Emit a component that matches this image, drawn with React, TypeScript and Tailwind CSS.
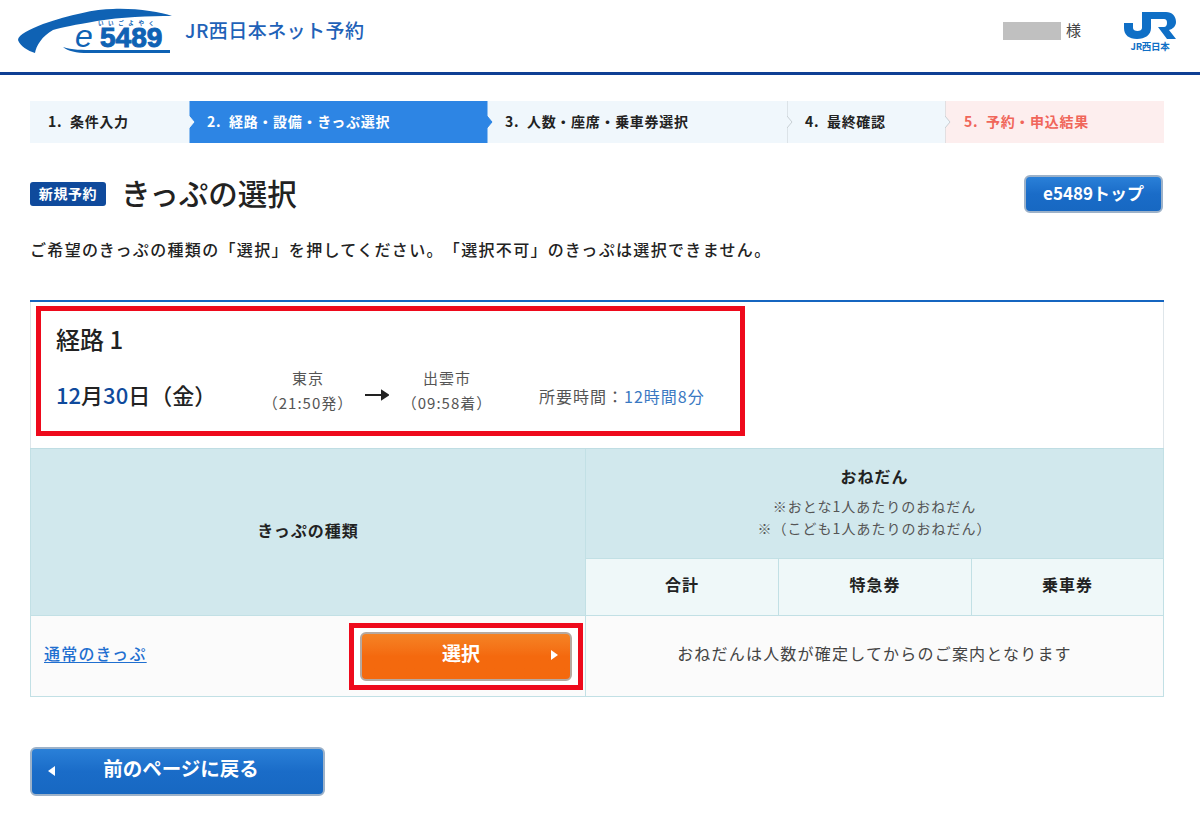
import React from "react";

const font = { fontFamily: '"Noto Sans CJK JP", "Noto Sans", sans-serif' };

function Logo() {
  return (
    <svg width="160" height="50" viewBox="17 8 160 50" className="block overflow-visible">
      <path d="M172 16 C160 12 135 8 113 9 C95 9 70 15 43 24 C30 29 18 35 18 40 C20 46 28 51 35 53 C36 46 42 36 53 30 C62 27 75 25 97 21 C120 17 150 16 172 16Z" fill="#0f62b4" />
      <path d="M63 47 C72 50 82 50 95 50 L170 50 L170 53 L88 53 C76 53 68 51 63 47Z" fill="#0f62b4" />
      <text x="75" y="47" fontFamily="Liberation Sans, sans-serif" fontStyle="italic" fontSize="32" fill="#0f62b4">e</text>
      <text x="100" y="47" fontFamily="Liberation Sans, sans-serif" fontWeight="700" fontSize="28" fill="#0f62b4" stroke="#0f62b4" strokeWidth="1">5489</text>
      <text x="98" y="24.5" fontFamily="Noto Sans CJK JP, sans-serif" fontWeight="700" fontSize="5.5" letterSpacing="4.6" fill="#0f62b4">いいごよやく</text>
    </svg>
  );
}

function JrLogo() {
  return (
    <div className="flex flex-col items-center">
      <svg width="52" height="27" viewBox="0 0 52 27" className="block">
        <path d="M18 0 H27 V16 C27 23 21 27 13 27 C5 27 0 23 0 16 V11 H9 V16 C9 18 11 19 13.5 19 C16 19 18 18 18 16Z" fill="#0f6fc6" />
        <path d="M27 0 H42 C48 0 52 4 52 10 C52 14 49 17 45 18 L52 27 H43 L34 15 H40 C42 15 43 13 43 11 C43 8 42 7 40 7 H27Z" fill="#0f6fc6" />
      </svg>
      <span className="mt-[2px] text-[9.5px] leading-[11px] font-bold text-[#0f6fc6] tracking-[-0.3px]">JR西日本</span>
    </div>
  );
}

function Sep({ fill, stroke }: { fill: string; stroke: string }) {
  return (
    <svg width="8" height="42" viewBox="0 0 8 42" className="absolute left-0 top-0 z-10">
      <path d="M0 0 V15 L5 21 L0 27 V42" fill={fill} stroke={stroke} strokeWidth="1" />
    </svg>
  );
}

function BlueButton({ children, className }: { children: React.ReactNode; className: string }) {
  return (
    <div className={`border-2 border-[#9db2c9] rounded-[6px] bg-gradient-to-b from-[#2a80d8] via-[#1a6cc8] to-[#1768c2] text-white font-bold ${className}`}>
      {children}
    </div>
  );
}

export default function App() {
  return (
    <div style={font} className="w-[1200px] h-[830px] bg-white text-[#222] overflow-hidden [text-spacing-trim:space-all]">
      <header className="h-[75px] border-b-[3px] border-[#0f3f94] flex items-start justify-between pl-[17px] pr-[24px]">
        <div className="flex items-start">
          <div className="mt-[8px]"><Logo /></div>
          <span className="ml-[8px] mt-[16px] text-[19px] leading-[28px] font-medium text-[#1f62b8] tracking-[0.45px]">JR西日本ネット予約</span>
        </div>
        <div className="flex items-start">
          <div className="mt-[22px] w-[58px] h-[18px] bg-[#c0c0c0]" />
          <span className="mt-[19px] ml-[5px] text-[15px] leading-[22px] text-[#444]">様</span>
          <div className="ml-[43px] mt-[12px]"><JrLogo /></div>
        </div>
      </header>

      <main className="pl-[30px] pr-[36px]">
        <ol className="mt-[26px] flex h-[42px] text-[14px] font-bold leading-[40px] tracking-[0.7px]">
          <li className="w-[159px] bg-[#f0f7fc] pl-[18px] text-[#222]">1.&nbsp; 条件入力</li>
          <li className="relative w-[298px] bg-[#2d85e4] pl-[18px] text-white">
            <Sep fill="#f0f7fc" stroke="#f0f7fc" />2.&nbsp; 経路・設備・きっぷ選択
          </li>
          <li className="relative w-[300px] bg-[#f0f7fc] pl-[18px] text-[#222]">
            <Sep fill="#2d85e4" stroke="#2d85e4" />3.&nbsp; 人数・座席・乗車券選択
          </li>
          <li className="relative w-[158px] bg-[#f0f7fc] pl-[18px] text-[#222]">
            <Sep fill="#f0f7fc" stroke="#c8cfd4" />4.&nbsp; 最終確認
          </li>
          <li className="relative w-[219px] bg-[#fdeeee] pl-[19px] text-[#f0665a]">
            <Sep fill="#f0f7fc" stroke="#c8cfd4" />5.&nbsp; 予約・申込結果
          </li>
        </ol>

        <div className="mt-[32px] h-[38px] flex items-center justify-between pr-[1px]">
          <div className="flex items-center">
            <span className="w-[76px] h-[24px] rounded-[3px] bg-[#0f4a9c] text-white text-[14px] leading-[22px] font-bold text-center tracking-[0.6px]">新規予約</span>
            <h1 className="ml-[15px] pb-[4px] text-[29.5px] leading-[38px] font-medium text-[#222]">きっぷの選択</h1>
          </div>
          <BlueButton className="w-[139px] h-[38px] text-center text-[17px] leading-[31px]">e5489トップ</BlueButton>
        </div>

        <p className="mt-[24px] text-[16px] leading-[24px] font-medium text-[#222] tracking-[1.33px]">
          ご希望のきっぷの種類の「選択」を押してください。「選択不可」のきっぷは選択できません。
        </p>

        <section className="mt-[39px] border-t-2 border-[#1565c0]">
          <div className="h-[146px] border-l border-r border-[#dfe6ea] pl-[5px] pt-[4px]">
            <div className="w-[709px] h-[130px] border-[5px] border-[#ee0a1c] pl-[15px] pt-[12px]">
              <h2 className="text-[24px] leading-[32px] font-medium text-[#222]">経路 1</h2>
              <div className="mt-[10px] flex items-start">
                <span className="w-[197px] pt-[13px] text-[22px] leading-[32px] font-medium text-[#222]">
                  <span className="text-[#0f4a9c]">12</span>月<span className="text-[#0f4a9c]">30</span>日（金）
                </span>
                <div className="w-[110px] text-center text-[15px] leading-[25px] text-[#555] tracking-[1px]">東京<br />（21:50発）</div>
                <svg width="24" height="12" viewBox="0 0 24 12" className="ml-[2px] mt-[24px]">
                  <path d="M0 6 H21 M17 2 L23 6 L17 10Z" stroke="#222" strokeWidth="2" fill="#222" />
                </svg>
                <div className="ml-[3px] w-[110px] text-center text-[15px] leading-[25px] text-[#555] tracking-[1px]">出雲市<br />（09:58着）</div>
                <span className="ml-[37px] pt-[19px] text-[16px] leading-[24px] text-[#555] tracking-[1px]">所要時間：<span className="text-[#3a78c2]">12時間8分</span></span>
              </div>
            </div>
          </div>

          <div className="grid grid-cols-[555px_579px] border-t border-[#bfdde3]">
            <div className="h-[166px] bg-[#d1e8ed] border-l border-[#c2e0e5] flex items-center justify-center pb-[4px] text-[16px] font-bold text-[#222] tracking-[1px]">きっぷの種類</div>
            <div className="border-l border-r border-[#c2e0e5]">
              <div className="h-[110px] bg-[#d1e8ed] border-b border-[#c2e0e5] flex flex-col items-center pt-[14px]">
                <span className="text-[16px] leading-[26px] font-bold text-[#222] tracking-[1px]">おねだん</span>
                <span className="mt-[6px] text-[14px] leading-[22px] text-[#555] tracking-[1px]">※おとな1人あたりのおねだん</span>
                <span className="text-[14px] leading-[22px] text-[#555] tracking-[1px]">※（こども1人あたりのおねだん）</span>
              </div>
              <div className="h-[56px] grid grid-cols-[193px_193px_1fr] bg-[#eff8f9] text-[16px] font-bold text-[#222] text-center leading-[51px] tracking-[1px]">
                <div className="border-r border-[#c2e0e5]">合計</div>
                <div className="border-r border-[#c2e0e5]">特急券</div>
                <div>乗車券</div>
              </div>
            </div>
            <div className="h-[82px] bg-[#fbfbfb] border-l border-t border-b border-[#c2e0e5] flex items-center justify-between pl-[13px] pr-[2px]">
              <a className="mb-[6px] text-[16px] font-medium text-[#1f6fd0] underline underline-offset-2 tracking-[1.3px]">通常のきっぷ</a>
              <div className="w-[234px] h-[67px] border-[5px] border-[#ee0a1c] bg-white flex items-center justify-center">
                <div className="relative w-[212px] h-[49px] rounded-[6px] border-2 border-[#b6a9a0] bg-gradient-to-b from-[#f58324] via-[#f4690e] to-[#f4690e] text-white font-bold text-[19px] leading-[37px] text-center pr-[10px]">
                  選択
                  <svg width="7" height="10" viewBox="0 0 7 10" className="absolute right-[12px] top-[16px]"><path d="M0 0 L7 5 L0 10Z" fill="#fff" /></svg>
                </div>
              </div>
            </div>
            <div className="h-[82px] bg-[#fbfbfb] border border-[#c2e0e5] flex items-center justify-center pb-[6px] text-[16px] text-[#444] tracking-[1.2px]">
              おねだんは人数が確定してからのご案内となります
            </div>
          </div>
        </section>

        <BlueButton className="relative mt-[50px] w-[295px] h-[49px] text-[19.5px] leading-[38px] text-center pl-[7px]">
          <svg width="7" height="10" viewBox="0 0 7 10" className="absolute left-[16px] top-[17px]"><path d="M7 0 L0 5 L7 10Z" fill="#fff" /></svg>
          前のページに戻る
        </BlueButton>
      </main>
    </div>
  );
}
